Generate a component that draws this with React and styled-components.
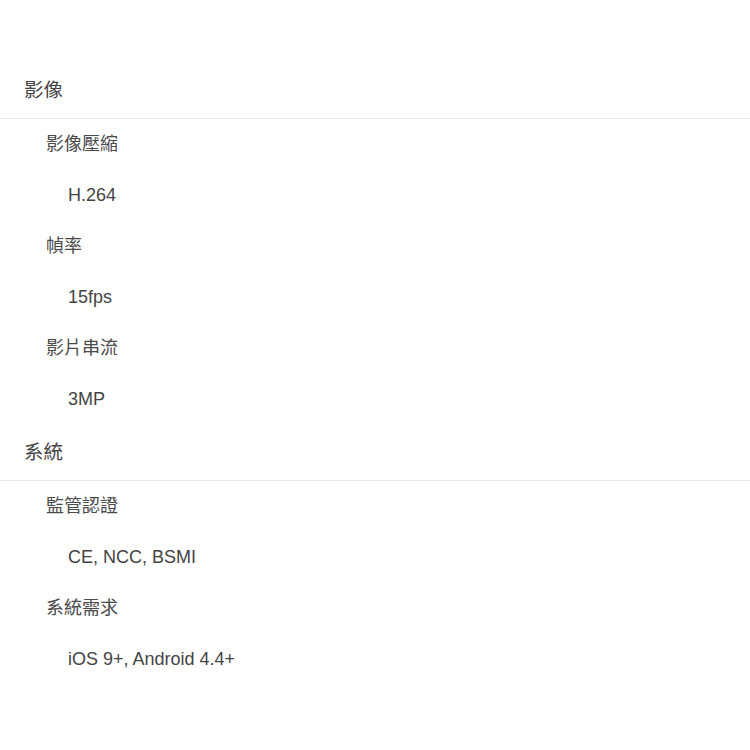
import React from 'react';
import styled, { createGlobalStyle } from 'styled-components';

const specs = [
  {
    title: '影像',
    items: [
      { label: '影像壓縮', value: 'H.264' },
      { label: '幀率', value: '15fps' },
      { label: '影片串流', value: '3MP' },
    ],
  },
  {
    title: '系統',
    items: [
      { label: '監管認證', value: 'CE, NCC, BSMI' },
      { label: '系統需求', value: 'iOS 9+, Android 4.4+' },
    ],
  },
];

const GlobalStyle = createGlobalStyle`
  body {
    margin: 0;
    background: #fff;
    font-family: 'Liberation Sans', Arial, 'Noto Sans CJK TC', sans-serif;
  }
`;

const Page = styled.div`
  padding-top: 63px;
  color: #444;
  font-size: 18px;
`;

const Section = styled.section`
  display: flex;
  flex-direction: column;
`;

const SectionTitle = styled.h3`
  margin: 0;
  padding: 2px 24px 2px;
  line-height: 51px;
  font-size: 19.5px;
  font-weight: 400;
  color: #444;
  border-bottom: 1px solid #e8e8e8;
`;

const List = styled.dl`
  margin: 0;
`;

const Label = styled.dt`
  padding-left: 46px;
  line-height: 51px;
  color: #4a4a4a;
`;

const Value = styled.dd`
  margin: 0;
  padding-left: 68px;
  line-height: 51px;
  color: #444;
`;

export default function App() {
  return (
    <>
      <GlobalStyle />
      <Page>
        {specs.map(section => (
          <Section key={section.title}>
            <SectionTitle>{section.title}</SectionTitle>
            <List>
              {section.items.map(item => (
                <React.Fragment key={item.label}>
                  <Label>{item.label}</Label>
                  <Value>{item.value}</Value>
                </React.Fragment>
              ))}
            </List>
          </Section>
        ))}
      </Page>
    </>
  );
}
